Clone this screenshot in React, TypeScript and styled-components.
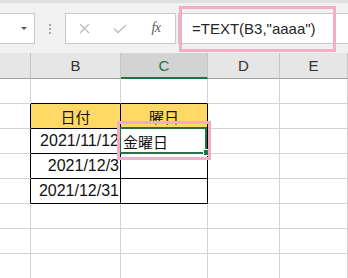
import React from "react";
import styled, { createGlobalStyle, css } from "styled-components";

const Global = createGlobalStyle`
  html, body { margin: 0; padding: 0; background: #fff; }
  body { font-family: "Liberation Sans", "Noto Sans CJK JP", sans-serif; overflow: hidden; }
`;

const Page = styled.div`
  width: 348px;
  height: 278px;
  overflow: hidden;
  display: flex;
  flex-direction: column;
`;

const Toolbar = styled.div`
  height: 53px;
  flex: none;
  box-sizing: border-box;
  background: #f1f1f1;
  border-top: 3px solid #e0e0e0;
  padding-top: 10px;
  display: flex;
  align-items: flex-start;
`;

const Box = styled.div`
  height: 31px;
  box-sizing: border-box;
  background: #fff;
  border: 1px solid #c9c9c9;
`;

const NameBox = styled(Box)`
  width: 36px;
  margin-left: -1px;
  display: flex;
  align-items: center;
  justify-content: flex-end;
  padding-right: 7px;
`;

const Caret = styled.div`
  width: 0;
  height: 0;
  border-left: 3px solid transparent;
  border-right: 3px solid transparent;
  border-top: 3px solid #555;
`;

const Grip = styled.div`
  width: 30px;
  height: 31px;
  display: flex;
  flex-direction: column;
  align-items: center;
  justify-content: center;
  gap: 2px;
`;

const Dot = styled.span`
  width: 2px;
  height: 2px;
  background: #a8a8a8;
`;

const FuncBox = styled(Box)`
  width: 111px;
  display: flex;
  align-items: center;
`;

const FuncButton = styled.div`
  width: 36px;
  height: 29px;
  display: flex;
  align-items: center;
  justify-content: center;
`;

const Fx = styled.span`
  font-family: "Liberation Serif", serif;
  font-style: italic;
  font-size: 14px;
  color: #5a5a5a;
  letter-spacing: -0.5px;
  margin-top: -1px;
`;

const FormulaInput = styled(Box)`
  position: relative;
  flex: 1;
  margin-left: 2px;
  margin-right: -1px;
  display: flex;
  align-items: center;
  padding-left: 13px;
  font-size: 15px;
  color: #262626;
  white-space: nowrap;
`;

const Mark = styled.div<{ $l: number; $t: number; $w: number; $h: number }>`
  position: absolute;
  left: ${(p) => p.$l}px;
  top: ${(p) => p.$t}px;
  width: ${(p) => p.$w}px;
  height: ${(p) => p.$h}px;
  box-sizing: border-box;
  border: 3px solid #f3adc7;
  pointer-events: none;
  z-index: 3;
`;

const Sheet = styled.div`
  display: grid;
  grid-template-columns: 31px 90px 87px 72px 1fr;
  grid-auto-rows: 25px;
  grid-template-rows: 26px;
`;

const Head = styled.div<{ $sel?: boolean }>`
  box-sizing: border-box;
  background: ${(p) => (p.$sel ? "#d3d3d3" : "#e6e6e6")};
  color: ${(p) => (p.$sel ? "#217346" : "#333")};
  border-right: 1px solid #c6c6c6;
  border-bottom: ${(p) => (p.$sel ? "2px solid #217346" : "1px solid #9f9f9f")};
  display: flex;
  align-items: center;
  justify-content: center;
  font-size: 15px;
  padding-bottom: ${(p) => (p.$sel ? "0" : "1px")};
`;

const Cell = styled.div<{
  $r?: boolean;
  $b?: boolean;
  $fill?: boolean;
  $align?: "left" | "right" | "center";
}>`
  position: relative;
  box-sizing: border-box;
  background: ${(p) => (p.$fill ? "#ffd966" : "#fff")};
  border-right: 1px solid ${(p) => (p.$r ? "#000" : "#d4d4d4")};
  border-bottom: 1px solid ${(p) => (p.$b ? "#000" : "#d4d4d4")};
  display: flex;
  align-items: center;
  white-space: nowrap;
  font-size: 16px;
  color: #111;
  ${(p) =>
    p.$align === "right"
      ? css`justify-content: flex-end; padding-right: 1px;`
      : p.$align === "center"
      ? css`justify-content: center; font-size: 15px;`
      : css`justify-content: flex-start; padding-left: 2px; font-size: 15px;`}
`;

const Selection = styled.div`
  position: absolute;
  left: -2px;
  top: -2px;
  right: 0;
  bottom: -1px;
  border-top: 2px solid #217346;
  border-bottom: 2px solid #217346;
  border-left: 2px solid #217346;
  border-right: 2px solid #217346;
  z-index: 2;
`;

const Handle = styled.div`
  position: absolute;
  right: -3px;
  bottom: -3px;
  width: 5px;
  height: 5px;
  background: #217346;
  border: 1px solid #fff;
  z-index: 2;
`;

const XIcon = () => (
  <svg width="11" height="11" viewBox="0 0 11 11">
    <path d="M1 1 L10 10 M10 1 L1 10" stroke="#bdbdbd" strokeWidth="1.3" fill="none" />
  </svg>
);

const CheckIcon = () => (
  <svg width="14" height="10" viewBox="0 0 14 10">
    <path d="M1 4.5 L5 8.5 L13 1" stroke="#bdbdbd" strokeWidth="1.5" fill="none" />
  </svg>
);

type Row = { a?: boolean; b?: string; c?: string; head?: boolean; sel?: boolean; topLine?: boolean; last?: boolean };

const rows: Row[] = [
  { topLine: true },
  { head: true, b: "日付", c: "曜日" },
  { b: "2021/11/12", c: "金曜日", sel: true },
  { b: "2021/12/3" },
  { b: "2021/12/31", last: true },
  {},
  {},
  {},
];

export default function App() {
  return (
    <Page>
      <Global />
      <Toolbar>
        <NameBox>
          <Caret />
        </NameBox>
        <Grip>
          <Dot />
          <Dot />
          <Dot />
        </Grip>
        <FuncBox>
          <FuncButton>
            <XIcon />
          </FuncButton>
          <FuncButton>
            <CheckIcon />
          </FuncButton>
          <FuncButton>
            <Fx>fx</Fx>
          </FuncButton>
        </FuncBox>
        <FormulaInput>
          =TEXT(B3,"aaaa")
          <Mark $l={0} $t={-8} $w={157} $h={46} />
        </FormulaInput>
      </Toolbar>
      <Sheet>
        <Head />
        <Head>B</Head>
        <Head $sel>C</Head>
        <Head>D</Head>
        <Head>E</Head>
        {rows.map((r, i) => {
          const inTable = i >= 1 && i <= 4;
          return (
            <React.Fragment key={i}>
              <Cell $r={inTable} />
              <Cell
                $r={inTable}
                $b={r.topLine || inTable}
                $fill={r.head}
                $align={r.head ? "center" : "right"}
              >
                {r.b}
              </Cell>
              <Cell
                $r={inTable}
                $b={r.topLine || inTable}
                $fill={r.head}
                $align={r.head ? "center" : "left"}
              >
                {r.c}
                {r.sel && (
                  <>
                    <Selection />
                    <Handle />
                    <Mark $l={-4} $t={-8} $w={94} $h={39} />
                  </>
                )}
              </Cell>
              <Cell />
              <Cell />
            </React.Fragment>
          );
        })}
      </Sheet>
    </Page>
  );
}
